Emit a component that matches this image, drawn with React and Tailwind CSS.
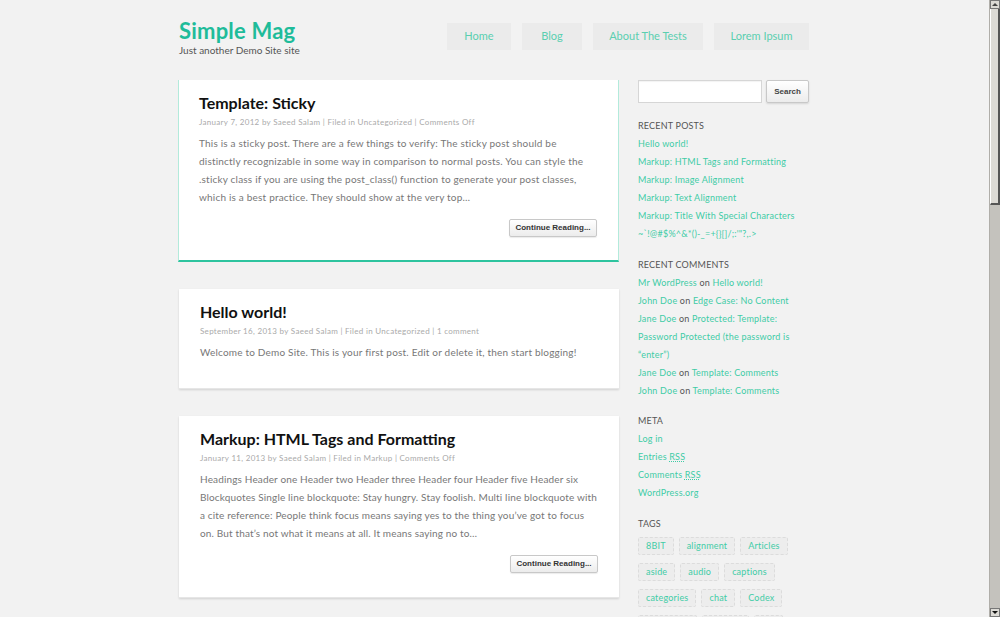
import React from 'react'

const font = { fontFamily: 'Lato, "Open Sans", sans-serif' }

const nav = [
  ['Home', 'w-[64px]'],
  ['Blog', 'w-[60px]'],
  ['About The Tests', 'w-[110px]'],
  ['Lorem Ipsum', 'w-[95px]'],
]

const recentPosts = [
  'Hello world!',
  'Markup: HTML Tags and Formatting',
  'Markup: Image Alignment',
  'Markup: Text Alignment',
  'Markup: Title With Special Characters ~`!@#$%^&*()-_=+{}[]/;:\'"?,.>',
]

const comments = [
  ['Mr WordPress', 'Hello world!'],
  ['John Doe', 'Edge Case: No Content'],
  ['Jane Doe', 'Protected: Template: Password Protected (the password is “enter”)'],
  ['Jane Doe', 'Template: Comments'],
  ['John Doe', 'Template: Comments'],
]

const tags = ['8BIT', 'alignment', 'Articles', 'aside', 'audio', 'captions', 'categories', 'chat', 'Codex', 'comments', 'content', 'css']

function ContinueButton() {
  return (
    <div className="flex justify-end mt-[13px]">
      <button
        className="h-[18px] w-[88px] text-[8px] font-bold text-[#333] bg-gradient-to-b from-white to-[#ececec] border border-[#c8c8c8] rounded-[2px] shadow-[0_1px_1px_rgba(0,0,0,0.08)]"
        style={{ fontFamily: '"Liberation Sans", Arial, sans-serif' }}
      >
        Continue Reading...
      </button>
    </div>
  )
}

function Post({ title, meta, children, sticky, more, pb = 'pb-[25px]', tracking = 'tracking-[0.2px]' }) {
  return (
    <article
      className={
        'bg-white pr-[21px] pt-[13px] ' +
        (sticky
          ? 'border-x border-[#b3eadb] border-b-2 border-b-[#2ec49f] pl-[20px] '
          : 'shadow-[0_1px_2px_rgba(0,0,0,0.14)] border-b border-[#e6e6e6] pl-[21px] ') +
        pb
      }
    >
      <h2 className="text-[16px] leading-[20px] font-bold text-[#111]">{title}</h2>
      <p className="mt-[3px] text-[8px] leading-[12px] tracking-[0.3px] text-[#aaa]">{meta}</p>
      <p className={'mt-[6px] text-[10px] leading-[18px] text-[#777] ' + tracking}>{children}</p>
      {more && <ContinueButton />}
    </article>
  )
}

function Widget({ title, children, className = 'mt-[13px]' }) {
  return (
    <section className={className}>
      <h3 className="text-[9px] leading-[18px] uppercase tracking-[0.2px] text-[#555]">{title}</h3>
      {children}
    </section>
  )
}

function Scrollbar() {
  return (
    <div className="w-[11px] shrink-0 flex flex-col bg-[#c4c2bd] border-l border-[#b0aea9]">
      <div className="h-[9px] bg-[#dcdad5] border border-[#777] flex items-center justify-center">
        <div className="w-0 h-0 border-l-[3px] border-r-[3px] border-b-[3px] border-l-transparent border-r-transparent border-b-[#444]" />
      </div>
      <div className="h-[196px] bg-[#dcdad5] border-l border-l-white border-r-2 border-r-[#555] border-b-2 border-b-[#555]" />
      <div className="flex-1" />
      <div className="h-[9px] bg-[#dcdad5] border border-[#777] flex items-center justify-center">
        <div className="w-0 h-0 border-l-[3px] border-r-[3px] border-t-[3px] border-l-transparent border-r-transparent border-t-[#111]" />
      </div>
    </div>
  )
}

export default function App() {
  return (
    <div className="h-[617px] flex overflow-hidden bg-[#f2f2f2]" style={font}>
      <div className="flex-1 overflow-hidden">
        <div className="w-[631px] ml-[178px]">
          {/* Header */}
          <header className="flex justify-between pt-[18px] pl-[1px]">
            <div>
              <h1 className="text-[22px] leading-[26px] font-bold text-[#1fbc9a] tracking-[0.2px]">Simple Mag</h1>
              <p className="text-[10px] leading-[12px] text-[#555]">Just another Demo Site site</p>
            </div>
            <nav className="flex gap-[11px] mt-[5px]">
              {nav.map(([n, w]) => (
                <a key={n} className={'h-[27px] flex items-center justify-center bg-[#ebebeb] text-[11px] text-[#5acfb0] ' + w}>
                  {n}
                </a>
              ))}
            </nav>
          </header>

          <div className="flex gap-[20px] mt-[24px]">
            {/* Posts */}
            <main className="w-[441px] flex flex-col gap-[27px]">
              <Post sticky more pb="pb-[23px]" title="Template: Sticky" meta="January 7, 2012 by Saeed Salam | Filed in Uncategorized | Comments Off">
                This is a sticky post. There are a few things to verify: The sticky post should be distinctly recognizable in some way in comparison to normal posts. You can style the .sticky class if you are using the post_class() function to generate your post classes, which is a best practice. They should show at the very top…
              </Post>
              <div className="pl-[1px] flex flex-col gap-[27px]">
                <Post pb="pb-[27px]" title="Hello world!" meta="September 16, 2013 by Saeed Salam | Filed in Uncategorized | 1 comment">
                  Welcome to Demo Site. This is your first post. Edit or delete it, then start blogging!
                </Post>
                <Post more pb="pb-[24px]" tracking="tracking-[0.15px]" title="Markup: HTML Tags and Formatting" meta="January 11, 2013 by Saeed Salam | Filed in Markup | Comments Off">
                  Headings Header one Header two Header three Header four Header five Header six Blockquotes Single line blockquote: Stay hungry. Stay foolish. Multi line blockquote with a cite reference: People think focus means saying yes to the thing you’ve got to focus on. But that’s not what it means at all. It means saying no to…
                </Post>
              </div>
            </main>

            {/* Sidebar */}
            <aside className="w-[171px] -ml-[1px] text-[9px] leading-[18px] tracking-[0.2px]">
              <div className="flex gap-[4px]">
                <input className="w-[124px] h-[23px] bg-white border border-[#d6d6d6] shadow-[inset_0_1px_1px_rgba(0,0,0,0.05)] outline-none" />
                <button
                  className="flex-1 h-[23px] text-[8px] font-bold text-[#444] tracking-normal bg-gradient-to-b from-white to-[#ececec] border border-[#c8c8c8] rounded-[2px] shadow-[0_1px_2px_rgba(0,0,0,0.12)]"
                  style={{ fontFamily: '"Liberation Sans", Arial, sans-serif' }}
                >
                  Search
                </button>
              </div>

              <Widget title="Recent Posts" className="mt-[14px]">
                <ul className="text-[#3fcca6]">
                  {recentPosts.map(p => <li key={p}>{p}</li>)}
                </ul>
              </Widget>

              <Widget title="Recent Comments">
                <ul className="text-[#555]">
                  {comments.map(([who, what], i) => (
                    <li key={i}>
                      <span className="text-[#3fcca6]">{who}</span> on <span className="text-[#3fcca6]">{what}</span>
                    </li>
                  ))}
                </ul>
              </Widget>

              <Widget title="Meta" className="mt-[12px]">
                <ul className="text-[#3fcca6]">
                  <li>Log in</li>
                  <li>Entries <abbr className="underline decoration-dotted">RSS</abbr></li>
                  <li>Comments <abbr className="underline decoration-dotted">RSS</abbr></li>
                  <li>WordPress.org</li>
                </ul>
              </Widget>

              <Widget title="Tags">
                <div className="flex flex-wrap gap-x-[5px] gap-y-[8px] mt-[4px]">
                  {tags.map(t => (
                    <span key={t} className="h-[18px] px-[7px] flex items-center bg-[#ededed] border border-dashed border-[#dcdcdc] rounded-[2px] text-[#3fcca6]">
                      {t}
                    </span>
                  ))}
                </div>
              </Widget>
            </aside>
          </div>
        </div>
      </div>
      <Scrollbar />
    </div>
  )
}
